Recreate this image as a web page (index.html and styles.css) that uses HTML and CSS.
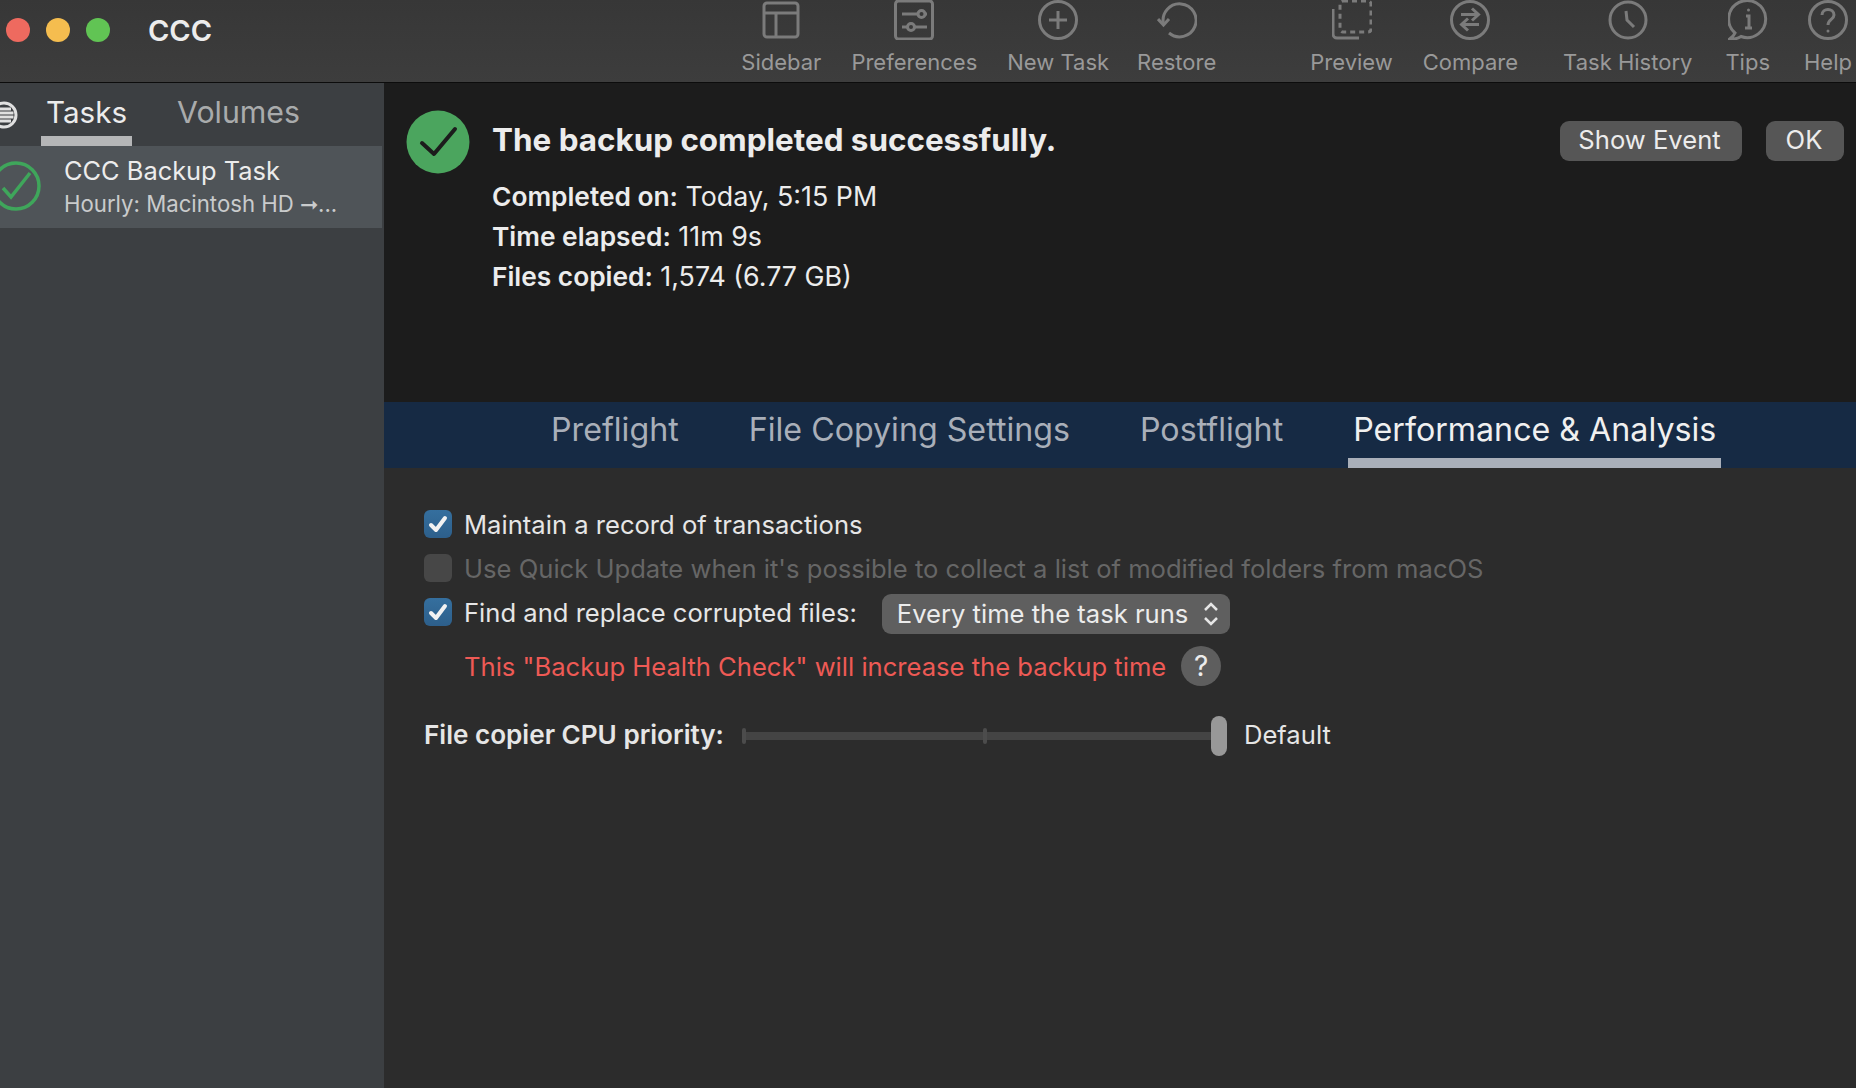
FILE: index.html
```html
<!DOCTYPE html>
<html lang="en">
<head>
    <meta charset="UTF-8">
    <meta name="viewport" content="width=device-width, initial-scale=1.0">
    <title>CCC</title>
    <link rel="stylesheet" href="styles.css">
</head>
<body>
    <header class="titlebar">
        <div class="traffic">
            <span class="light red"></span>
            <span class="light yellow"></span>
            <span class="light green"></span>
        </div>
        <div class="app-name">CCC</div>
        <nav class="toolbar">
            <div class="tool">
                <svg viewBox="0 0 40 40"><rect x="3" y="3" width="34" height="34" rx="3"/><path d="M3 13H37M15 13V37"/></svg>
                <span>Sidebar</span>
            </div>
            <div class="tool">
                <svg viewBox="0 0 40 40"><rect x="1.5" y="1" width="37" height="38" rx="3"/><path d="M8 14H24M31 14H33M8 27H13M21 27H33"/><circle cx="27.5" cy="14" r="3.5"/><circle cx="17" cy="27" r="3.5"/></svg>
                <span>Preferences</span>
            </div>
            <div class="tool">
                <svg viewBox="0 0 40 40"><circle cx="20" cy="20" r="18.5"/><path d="M20 11V29M11 20H29"/></svg>
                <span>New Task</span>
            </div>
            <div class="tool tool-tight">
                <svg viewBox="0 0 40 40"><path d="M6.500 24A16.500 16.500 0 1 1 12 33"/><path d="M1 19L6.500 25L12 19"/></svg>
                <span>Restore</span>
            </div>
            <div class="tool tool-space">
                <svg viewBox="0 0 40 40"><rect x="8" y="1" width="31" height="31" rx="3" stroke-dasharray="5 4"/><path d="M1 9V34A4 4 0 0 0 5 38H27"/></svg>
                <span>Preview</span>
            </div>
            <div class="tool">
                <svg viewBox="0 0 40 40"><circle cx="20" cy="20" r="18.5"/><path d="M11 15H28M22 9L28.500 15L22 21M29 25H12M18 19L11.500 25L18 31" transform="translate(0 -.5)"/></svg>
                <span>Compare</span>
            </div>
            <div class="tool tool-wide">
                <svg viewBox="0 0 40 40"><circle cx="20" cy="20" r="18"/><path d="M18 11L19 20L26 27"/></svg>
                <span>Task History</span>
            </div>
            <div class="tool tool-tips">
                <svg viewBox="0 0 40 40"><path d="M7 33A18.500 18.500 0 1 1 13 36.500C9 39 5 39.500 1 39.500C4 37.500 6 35.500 7 33Z"/><path d="M18 16H21V28H24M17 28H21"/><circle class="dot" cx="20.500" cy="10" r="1.500"/></svg>
                <span>Tips</span>
            </div>
            <div class="tool tool-help">
                <svg viewBox="0 0 40 40"><circle cx="20" cy="20" r="18.500"/><path d="M14 15C14 7.500 26 7.500 26 15C26 19.500 20 19.500 20 25"/><circle class="dot" cx="20" cy="31" r="1.500"/></svg>
                <span>Help</span>
            </div>
        </nav>
    </header>

    <div class="window">
        <aside class="sidebar">
            <div class="side-tabs">
                <svg class="list-icon" viewBox="0 0 18 32"><circle cx="4" cy="16" r="12"/><path d="M0 10H11M0 14H13.500M0 18H13.500M0 22H11"/></svg>
                <div class="side-tab active">Tasks</div>
                <div class="side-tab">Volumes</div>
            </div>
            <div class="task-item">
                <svg class="task-check" viewBox="0 0 42 52"><circle cx="16" cy="26" r="23"/><path d="M3 28L11 37L30 13"/></svg>
                <div class="task-text">
                    <div class="task-name">CCC Backup Task</div>
                    <div class="task-sub">Hourly: Macintosh HD ➞...</div>
                </div>
            </div>
        </aside>

        <main class="main">
            <section class="result">
                <svg class="result-icon" viewBox="0 0 64 64"><circle cx="32" cy="32" r="31.500"/><path d="M16 33L28 44L49 19"/></svg>
                <div class="result-text">
                    <h1>The backup completed successfully.</h1>
                    <p><b>Completed on:</b> Today, 5:15 PM</p>
                    <p><b>Time elapsed:</b> 11m 9s</p>
                    <p><b>Files copied:</b> 1,574 (6.77 GB)</p>
                </div>
                <div class="result-buttons">
                    <button class="btn btn-show">Show Event</button>
                    <button class="btn btn-ok">OK</button>
                </div>
            </section>

            <nav class="tabs">
                <div class="tab">Preflight</div>
                <div class="tab">File Copying Settings</div>
                <div class="tab">Postflight</div>
                <div class="tab active">Performance &amp; Analysis</div>
            </nav>

            <section class="settings">
                <div class="row">
                    <span class="check on"><svg viewBox="0 0 28 28"><path d="M7 15L12 20L21 8"/></svg></span>
                    <span>Maintain a record of transactions</span>
                </div>
                <div class="row row-off">
                    <span class="check"></span>
                    <span>Use Quick Update when it's possible to collect a list of modified folders from macOS</span>
                </div>
                <div class="row row-select">
                    <span class="check on"><svg viewBox="0 0 28 28"><path d="M7 15L12 20L21 8"/></svg></span>
                    <span>Find and replace corrupted files:</span>
                    <div class="select">
                        <span>Every time the task runs</span>
                        <svg viewBox="0 0 16 26"><path d="M2 9L8 3L14 9M2 17L8 23L14 17"/></svg>
                    </div>
                </div>
                <div class="row row-warning">
                    <span class="warning">This "Backup Health Check" will increase the backup time</span>
                    <span class="help-btn">?</span>
                </div>
                <div class="row row-slider">
                    <b>File copier CPU priority:</b>
                    <div class="slider">
                        <span class="tick tick-start"></span>
                        <span class="tick tick-mid"></span>
                        <span class="thumb"></span>
                    </div>
                    <span>Default</span>
                </div>
            </section>
        </main>
    </div>
</body>
</html>
```

FILE: styles.css
```css
* {
    box-sizing: border-box;
}

html, body {
    height: 100%;
}

body {
    margin: 0;
    display: flex;
    flex-direction: column;
    overflow: hidden;
    background: #2c2c2c;
    color: #e6e6e6;
    font-family: 'Inter', 'Roboto', sans-serif;
}

/* title bar */
.titlebar {
    height: 83px;
    flex-shrink: 0;
    display: flex;
    background: linear-gradient(#373737, #3d3d3d);
    border-bottom: 1px solid #0c0c0c;
}

.traffic {
    display: flex;
    gap: 16px;
    padding: 18px 0 0 6px;
}

.light {
    width: 24px;
    height: 24px;
    border-radius: 50%;
}

.red { background: #ee6a5f; }
.yellow { background: #f5bd4f; }
.green { background: #61c454; }

.app-name {
    margin: 13px 0 0 38px;
    font-size: 29px;
    line-height: 35px;
    font-weight: 600;
    color: #ececec;
}

.toolbar {
    margin-left: auto;
    padding-right: 4px;
    display: flex;
    gap: 30px;
}

.tool {
    display: flex;
    flex-direction: column;
    align-items: center;
    color: #999;
    font-size: 22px;
    line-height: 24px;
}

.tool svg {
    width: 40px;
    height: 40px;
    margin-bottom: 10px;
    fill: none;
    stroke: #7b7b7b;
    stroke-width: 3;
}

.tool svg .dot {
    fill: #7b7b7b;
    stroke: none;
}

.tool-tight {
    margin-left: -2px;
}

.tool-space {
    margin-left: 64px;
}

.tool-wide {
    margin-left: 15px;
}

.tool-tips {
    margin-left: 3px;
}

.tool-help {
    margin-left: 4px;
}

/* sidebar */
.window {
    flex: 1;
    display: flex;
    min-height: 0;
}

.sidebar {
    width: 384px;
    flex-shrink: 0;
    background: #3c3f42;
}

.side-tabs {
    height: 63px;
    display: flex;
}

.list-icon {
    width: 18px;
    height: 32px;
    margin: 16px 23px 0 0;
    fill: none;
    stroke: #e0e0e0;
    stroke-width: 3;
}

.side-tab {
    padding: 11px 5px 0;
    margin-right: 40px;
    font-size: 30.300px;
    line-height: 36px;
    color: #a9abac;
}

.side-tab.active {
    font-size: 29.600px;
    color: #ececec;
    border-bottom: 10px solid #b5b6b7;
}

.task-item {
    width: 382px;
    height: 82px;
    display: flex;
    background: #4f5458;
}

.task-check {
    width: 42px;
    height: 52px;
    margin: 14px 22px 0 0;
    flex-shrink: 0;
    fill: none;
    stroke: #3fa65b;
    stroke-width: 3.500;
}

.task-name {
    margin-top: 9px;
    font-size: 25.400px;
    line-height: 32px;
    color: #ececec;
}

.task-sub {
    font-size: 22.200px;
    line-height: 33px;
    color: #c9cbcc;
}

/* result header */
.main {
    flex: 1;
    display: flex;
    flex-direction: column;
    min-width: 0;
}

.result {
    height: 319px;
    flex-shrink: 0;
    display: flex;
    padding: 27px 12px 0 22px;
    background: #1c1c1c;
}

.result-icon {
    width: 64px;
    height: 64px;
    margin-right: 22px;
    flex-shrink: 0;
}

.result-icon circle {
    fill: #4ba55e;
}

.result-icon path {
    fill: none;
    stroke: #1c1c1c;
    stroke-width: 4;
    stroke-linecap: round;
    stroke-linejoin: round;
}

.result-text {
    flex: 1;
    color: #ececec;
}

.result-text h1 {
    margin: 10px 0 16px;
    font-size: 31.400px;
    line-height: 40px;
    font-weight: 700;
}

.result-text p {
    height: 40px;
    margin: 0;
    font-size: 26.800px;
    line-height: 40px;
}

.result-text b {
    font-size: 26.300px;
    font-weight: 600;
}

.result-buttons {
    display: flex;
    gap: 24px;
    margin-top: 11px;
    align-items: flex-start;
}

.btn {
    height: 40px;
    padding: 0 0 4px;
    border: none;
    border-radius: 9px;
    background: #565656;
    color: #ececec;
    font-family: inherit;
    font-size: 25.600px;
}

.btn-show {
    width: 182px;
    padding-right: 3px;
}

.btn-ok {
    width: 78px;
    padding-right: 2px;
}

/* tabs */
.tabs {
    height: 66px;
    flex-shrink: 0;
    display: flex;
    gap: 60px;
    padding-left: 162px;
    background: #162a44;
}

.tab {
    padding: 8px 5px 0;
    font-size: 32.200px;
    line-height: 40px;
    color: #a9afb9;
}

.tab.active {
    color: #f0f0f0;
    border-bottom: 10px solid #a9afb9;
}

/* settings */
.settings {
    flex: 1;
    padding: 42px 40px;
    font-size: 25.600px;
}

.row {
    display: flex;
    align-items: center;
    height: 28px;
    margin-bottom: 16px;
    gap: 12px;
    white-space: nowrap;
}

.row-off {
    color: #666;
    margin-bottom: 12px;
}

.check {
    width: 28px;
    height: 28px;
    flex-shrink: 0;
    border-radius: 6px;
    background: #474747;
}

.check.on {
    background: linear-gradient(#356f9e, #2d5f8b);
}

.check svg {
    display: block;
    fill: none;
    stroke: #f2f2f2;
    stroke-width: 4;
    stroke-linecap: round;
    stroke-linejoin: round;
}

.row-select {
    height: 40px;
    margin-bottom: 12px;
}

.row-select > span {
    margin-bottom: 4px;
}

.select {
    width: 348px;
    height: 40px;
    margin-left: 13px;
    padding: 0 11px 2px 15px;
    display: flex;
    align-items: center;
    justify-content: space-between;
    border-radius: 9px;
    background: #5f5f5f;
    color: #ececec;
}

.select svg {
    width: 16px;
    height: 26px;
    margin-top: 2px;
    fill: none;
    stroke: #e6e6e6;
    stroke-width: 2.500;
}

.row-warning {
    height: 40px;
    margin-bottom: 30px;
    padding-left: 40px;
    gap: 15px;
}

.warning {
    color: #ee5a55;
}

.help-btn {
    width: 40px;
    height: 40px;
    display: flex;
    align-items: center;
    justify-content: center;
    border-radius: 50%;
    background: #5e5e5e;
    font-size: 28px;
    color: #ececec;
}

.row-slider {
    height: 40px;
    margin-bottom: 0;
    gap: 17px;
}

.row-slider b,
.row-slider > span {
    margin-bottom: 4px;
}

.row-slider b {
    font-size: 26.100px;
    font-weight: 600;
}

.slider {
    position: relative;
    width: 485px;
    height: 8px;
    margin-left: 1px;
    background: #444;
}

.tick {
    position: absolute;
    top: -4px;
    width: 4px;
    height: 16px;
    border-radius: 2px;
    background: #4c4c4c;
}

.tick-start {
    left: 0;
}

.tick-mid {
    left: 241px;
}

.thumb {
    position: absolute;
    top: -16px;
    right: 0;
    width: 16px;
    height: 40px;
    border-radius: 8px;
    background: #989898;
}
```
